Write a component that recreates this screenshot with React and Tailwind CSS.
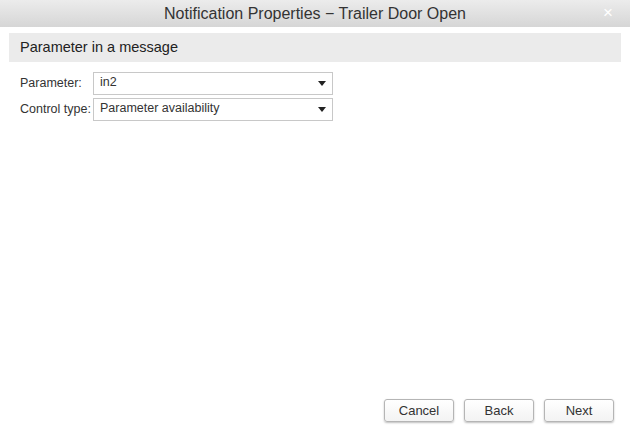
const font = { fontFamily: '"Liberation Sans", Arial, sans-serif' };

function Caret() {
    return (
        <svg width="8" height="5" viewBox="0 0 8 5" className="shrink-0">
            <path d="M0 0 H8 L4 5 Z" fill="#222" />
        </svg>
    );
}

function Select({ value }) {
    return (
        <div className="w-[240px] h-[23px] border border-[#c8c8c8] bg-white flex items-center justify-between pl-[6px] pr-[6px] text-[12.5px] text-[#333]">
            <span className="-mt-[2px]">{value}</span>
            <Caret />
        </div>
    );
}

function Button({ children }) {
    return (
        <button className="w-[70px] h-[23px] rounded-[3px] border border-[#b5b5b5] bg-gradient-to-b from-white to-[#f3f3f3] shadow-[0_1px_2px_rgba(0,0,0,0.25)] text-[13px] text-[#333]">
            {children}
        </button>
    );
}

export default function App() {
    return (
        <div className="w-[630px] h-[436px] bg-white flex flex-col" style={font}>
            <div className="h-[27px] shrink-0 bg-gradient-to-b from-[#ececec] to-[#d6d6d6] relative flex items-center justify-center">
                <span className="whitespace-nowrap text-[16px] text-[#333]">Notification Properties − Trailer Door Open</span>
                <span className="absolute right-[17px] top-[4px] text-[17px] text-white leading-none">×</span>
            </div>
            <div className="px-[9px] pt-[6px]">
                <div className="h-[29px] bg-[#ebebeb] flex items-center pl-[11px] text-[14.5px] text-[#222]">Parameter in a message</div>
                <div className="pl-[11px] pt-[10px] flex flex-col gap-[3px] text-[12.5px] text-[#333]">
                    <div className="flex items-center">
                        <span className="w-[73px] shrink-0 whitespace-nowrap">Parameter:</span>
                        <Select value="in2" />
                    </div>
                    <div className="flex items-center">
                        <span className="w-[73px] shrink-0 whitespace-nowrap">Control type:</span>
                        <Select value="Parameter availability" />
                    </div>
                </div>
            </div>
            <div className="flex-1" />
            <div className="flex justify-end gap-[10px] pr-[16px] pb-[14px]">
                <Button>Cancel</Button>
                <Button>Back</Button>
                <Button>Next</Button>
            </div>
        </div>
    );
}
